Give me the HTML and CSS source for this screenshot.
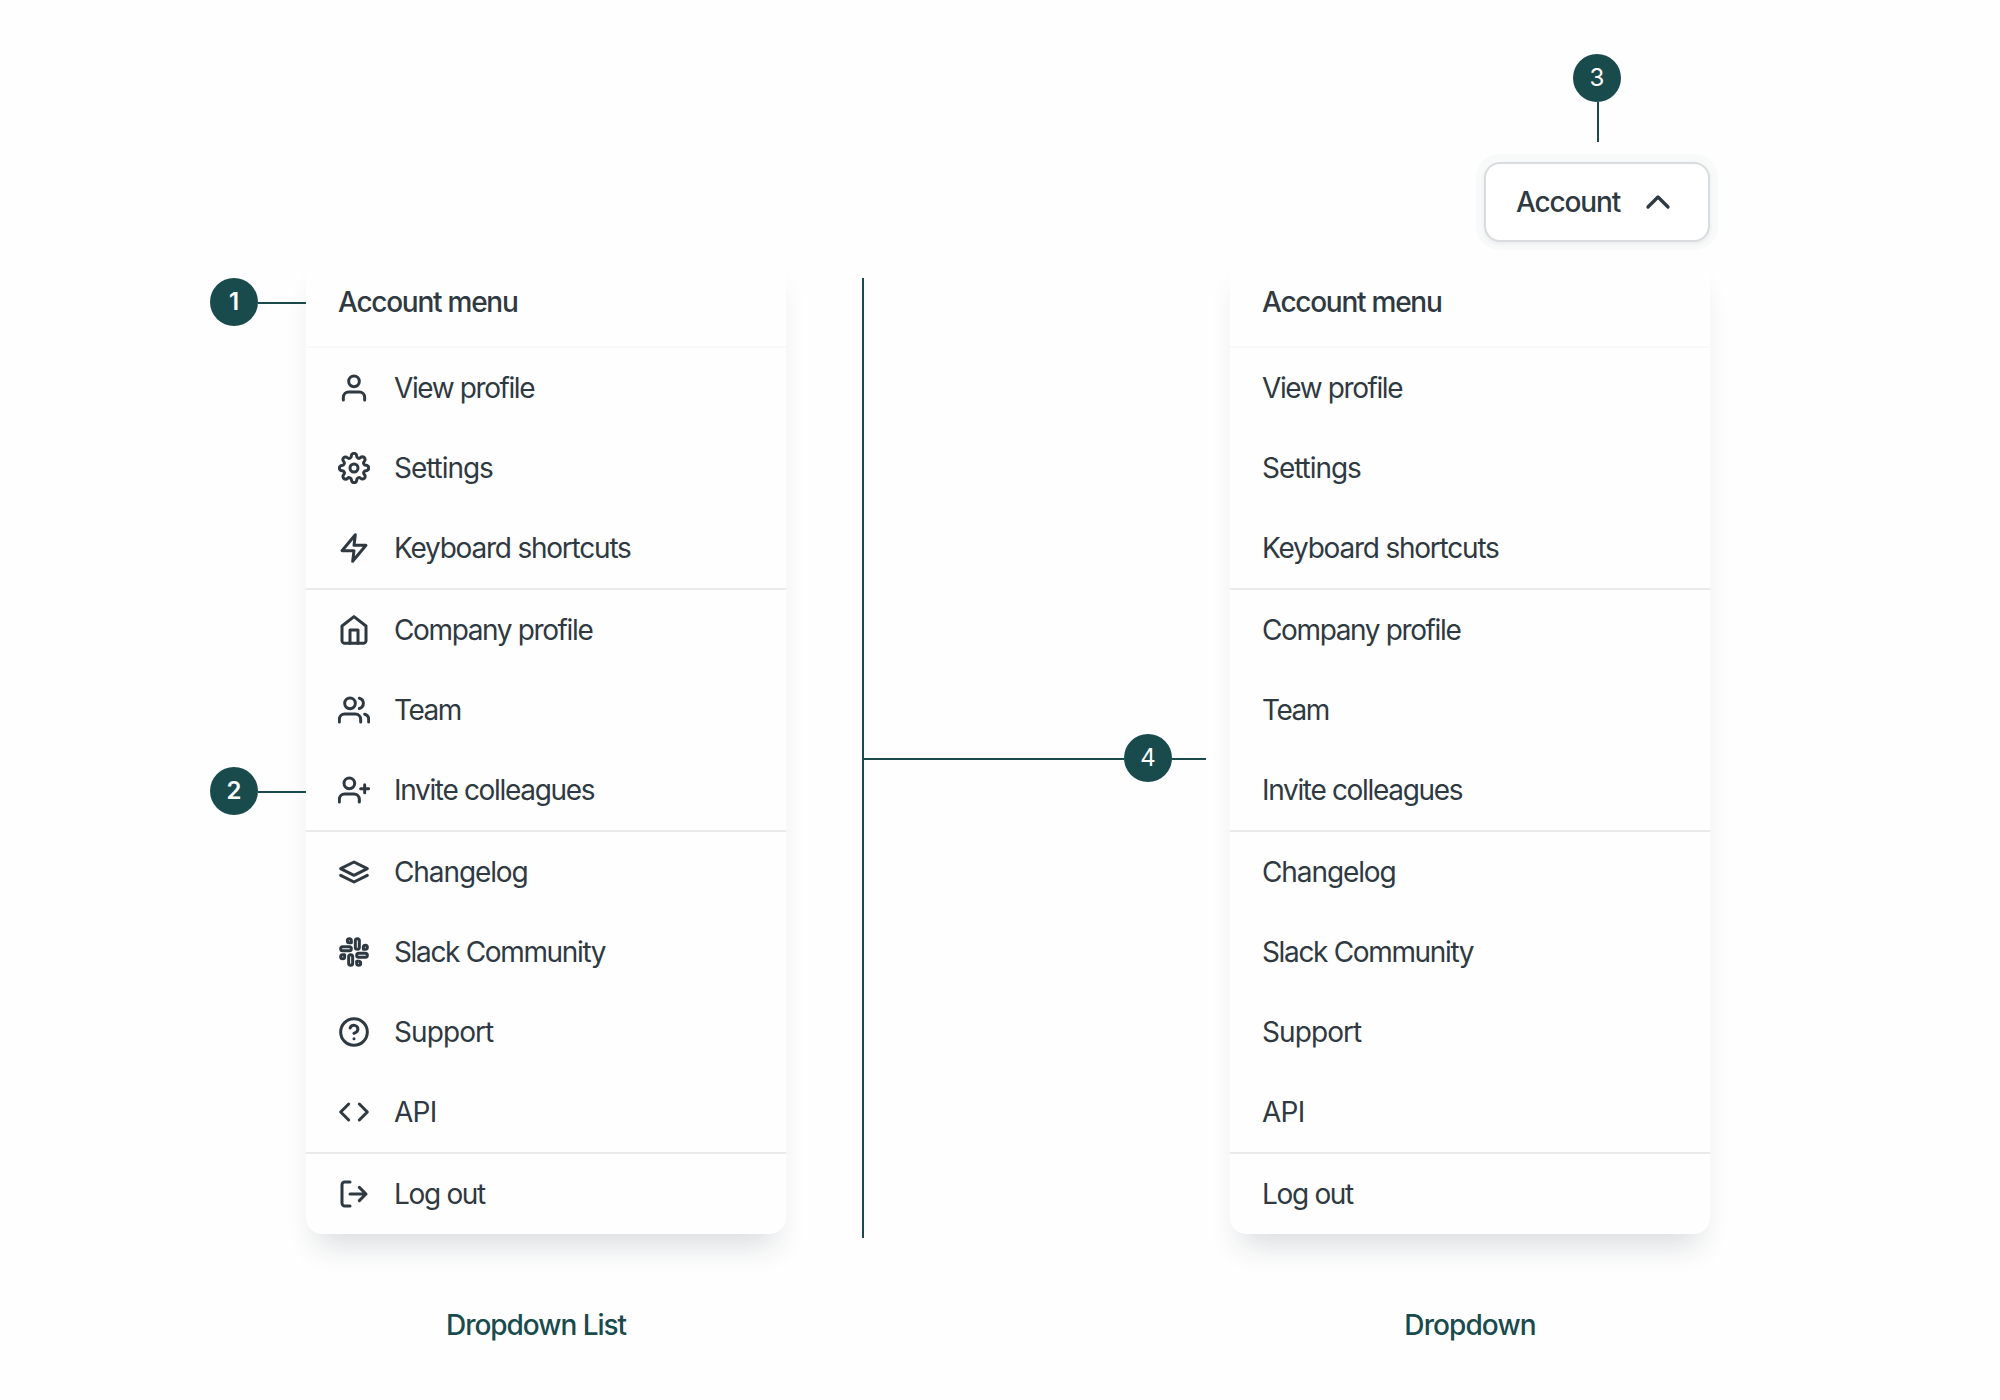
FILE: index.html
```html
<!DOCTYPE html>
<html lang="en">
<head>
<meta charset="utf-8">
<title>Dropdown anatomy</title>
<link rel="stylesheet" href="styles.css">
</head>
<body>
<svg class="sprite" aria-hidden="true">
  <symbol id="user" viewBox="0 0 24 24"><path d="M20 21v-2a4 4 0 0 0-4-4H8a4 4 0 0 0-4 4v2"/><circle cx="12" cy="7" r="4"/></symbol>
  <symbol id="settings" viewBox="0 0 24 24"><circle cx="12" cy="12" r="3"/><path d="M19.4 15a1.65 1.65 0 0 0 .33 1.82l.06.06a2 2 0 0 1 0 2.83 2 2 0 0 1-2.83 0l-.06-.06a1.65 1.65 0 0 0-1.82-.33 1.65 1.65 0 0 0-1 1.51V21a2 2 0 0 1-2 2 2 2 0 0 1-2-2v-.09A1.65 1.65 0 0 0 9 19.4a1.65 1.65 0 0 0-1.82.33l-.06.06a2 2 0 0 1-2.83 0 2 2 0 0 1 0-2.83l.06-.06a1.65 1.65 0 0 0 .33-1.82 1.65 1.65 0 0 0-1.51-1H3a2 2 0 0 1-2-2 2 2 0 0 1 2-2h.09A1.65 1.65 0 0 0 4.6 9a1.65 1.65 0 0 0-.33-1.82l-.06-.06a2 2 0 0 1 0-2.83 2 2 0 0 1 2.83 0l.06.06a1.65 1.65 0 0 0 1.82.33H9a1.65 1.65 0 0 0 1-1.51V3a2 2 0 0 1 2-2 2 2 0 0 1 2 2v.09a1.65 1.65 0 0 0 1 1.51 1.65 1.65 0 0 0 1.82-.33l.06-.06a2 2 0 0 1 2.83 0 2 2 0 0 1 0 2.83l-.06.06a1.65 1.65 0 0 0-.33 1.82V9a1.65 1.65 0 0 0 1.51 1H21a2 2 0 0 1 2 2 2 2 0 0 1-2 2h-.09a1.65 1.65 0 0 0-1.51 1z"/></symbol>
  <symbol id="zap" viewBox="0 0 24 24"><path d="M13 2 3 14h9l-1 8 10-12h-9l1-8z"/></symbol>
  <symbol id="home" viewBox="0 0 24 24"><path d="m3 9 9-7 9 7v11a2 2 0 0 1-2 2H5a2 2 0 0 1-2-2z"/><path d="M9 22V12h6v10"/></symbol>
  <symbol id="users" viewBox="0 0 24 24"><path d="M17 21v-2a4 4 0 0 0-4-4H5a4 4 0 0 0-4 4v2"/><circle cx="9" cy="7" r="4"/><path d="M23 21v-2a4 4 0 0 0-3-3.87M16 3.13a4 4 0 0 1 0 7.75"/></symbol>
  <symbol id="user-plus" viewBox="0 0 24 24"><path d="M16 21v-2a4 4 0 0 0-4-4H5a4 4 0 0 0-4 4v2"/><circle cx="8.5" cy="7" r="4"/><path d="M20 8v6M23 11h-6"/></symbol>
  <symbol id="layers" viewBox="0 0 24 24"><path d="M12 4.5 2 9.5l10 5 10-5-10-5z"/><path d="m2 14.500 10 5 10-5"/></symbol>
  <symbol id="slack" viewBox="0 0 24 24"><path d="M14.500 10c-.83 0-1.500-.67-1.500-1.500v-5c0-.83.67-1.500 1.500-1.500s1.500.67 1.500 1.500v5c0 .83-.67 1.500-1.500 1.500z"/><path d="M20.500 10H19V8.500c0-.83.67-1.500 1.500-1.500s1.500.67 1.500 1.500-.67 1.500-1.500 1.500z"/><path d="M9.500 14c.83 0 1.500.67 1.500 1.500v5c0 .83-.67 1.500-1.500 1.500S8 21.330 8 20.500v-5c0-.83.67-1.500 1.500-1.500z"/><path d="M3.500 14H5v1.500c0 .83-.67 1.500-1.500 1.500S2 16.330 2 15.500 2.670 14 3.500 14z"/><path d="M14 14.500c0-.83.67-1.500 1.500-1.500h5c.83 0 1.500.67 1.500 1.500s-.67 1.500-1.500 1.500h-5c-.83 0-1.500-.67-1.500-1.500z"/><path d="M15.500 19H14v1.500c0 .83.67 1.500 1.500 1.500s1.500-.67 1.500-1.500-.67-1.500-1.500-1.500z"/><path d="M10 9.500C10 8.670 9.330 8 8.500 8h-5C2.670 8 2 8.670 2 9.500S2.670 11 3.500 11h5c.83 0 1.500-.67 1.500-1.500z"/><path d="M8.500 5H10V3.500C10 2.670 9.330 2 8.500 2S7 2.670 7 3.500 7.670 5 8.500 5z"/></symbol>
  <symbol id="help" viewBox="0 0 24 24"><circle cx="12" cy="12" r="10"/><path d="M9.090 9a3 3 0 0 1 5.830 1c0 2-3 3-3 3M12 17h.01"/></symbol>
  <symbol id="code" viewBox="0 0 24 24"><path d="m16 18 6-6-6-6M8 6l-6 6 6 6"/></symbol>
  <symbol id="log-out" viewBox="0 0 24 24"><path d="M9 21H5a2 2 0 0 1-2-2V5a2 2 0 0 1 2-2h4M16 17l5-5-5-5M21 12H9"/></symbol>
  <symbol id="chevron-up" viewBox="0 0 24 24"><path d="m18 15-6-6-6 6"/></symbol>
</svg>
<main class="board">
  <section class="callouts">
    <div class="callout"><span class="badge strong">1</span><span class="lead"></span></div>
    <div class="callout"><span class="badge strong">2</span><span class="lead"></span></div>
  </section>

  <section class="column">
    <div class="menu">
      <h2 class="menu-title"><span class="t-title">Account menu</span></h2>
      <ul class="group">
        <li><svg class="icon"><use href="#user"/></svg><span class="t-view">View profile</span></li>
        <li><svg class="icon"><use href="#settings"/></svg><span class="t-settings">Settings</span></li>
        <li><svg class="icon"><use href="#zap"/></svg><span class="t-keyboard">Keyboard shortcuts</span></li>
      </ul>
      <ul class="group">
        <li><svg class="icon"><use href="#home"/></svg><span class="t-company">Company profile</span></li>
        <li><svg class="icon"><use href="#users"/></svg><span class="t-team">Team</span></li>
        <li><svg class="icon"><use href="#user-plus"/></svg><span class="t-invite">Invite colleagues</span></li>
      </ul>
      <ul class="group">
        <li><svg class="icon"><use href="#layers"/></svg><span class="t-changelog">Changelog</span></li>
        <li><svg class="icon"><use href="#slack"/></svg><span class="t-slack">Slack Community</span></li>
        <li><svg class="icon"><use href="#help"/></svg><span class="t-support">Support</span></li>
        <li><svg class="icon"><use href="#code"/></svg><span class="t-api">API</span></li>
      </ul>
      <ul class="group">
        <li><svg class="icon"><use href="#log-out"/></svg><span class="t-logout">Log out</span></li>
      </ul>
    </div>
    <p class="caption caption-list"><span class="t-list">Dropdown List</span></p>
  </section>

  <section class="bridge">
    <span class="rule"></span>
    <span class="lead lead-long"></span>
    <span class="badge">4</span>
    <span class="lead lead-short"></span>
  </section>

  <section class="column">
    <div class="trigger-area">
      <div class="callout-down"><span class="badge">3</span><span class="stem"></span></div>
      <button class="trigger" type="button"><span class="t-account">Account</span><svg class="icon chevron"><use href="#chevron-up"/></svg></button>
    </div>
    <div class="menu">
      <h2 class="menu-title"><span class="t-title">Account menu</span></h2>
      <ul class="group">
        <li><span class="t-view">View profile</span></li>
        <li><span class="t-settings">Settings</span></li>
        <li><span class="t-keyboard">Keyboard shortcuts</span></li>
      </ul>
      <ul class="group">
        <li><span class="t-company">Company profile</span></li>
        <li><span class="t-team">Team</span></li>
        <li><span class="t-invite">Invite colleagues</span></li>
      </ul>
      <ul class="group">
        <li><span class="t-changelog">Changelog</span></li>
        <li><span class="t-slack">Slack Community</span></li>
        <li><span class="t-support">Support</span></li>
        <li><span class="t-api">API</span></li>
      </ul>
      <ul class="group">
        <li><span class="t-logout">Log out</span></li>
      </ul>
    </div>
    <p class="caption"><span class="t-dropdown">Dropdown</span></p>
  </section>
</main>
</body>
</html>
```
FILE: styles.css
```css
* { box-sizing: border-box; margin: 0; padding: 0; }

body {
  background: #fefefe;
  color: #2f3941;
  font-family: Inter, "Liberation Sans", sans-serif;
  font-size: 28px;
  line-height: 40px;
}

.sprite { display: none; }

.board {
  width: 2000px;
  height: 1400px;
  display: flex;
  padding-left: 210px;
  overflow: hidden;
}

/* Numbered callouts */
.callouts {
  width: 96px;
  padding-top: 278px;
  display: flex;
  flex-direction: column;
  gap: 441px;
}
.callout { display: flex; align-items: center; }
.badge {
  flex: none;
  width: 48px;
  height: 48px;
  border-radius: 50%;
  background: #194b4d;
  color: #fff;
  font-size: 24px;
  line-height: 48px;
  text-align: center;
}
.strong { font-weight: 600; }
.lead { height: 2px; background: #194b4d; margin-top: 2px; }
.callout .lead { flex: 1; }

/* Menus */
.column {
  width: 480px;
  display: flex;
  flex-direction: column;
  justify-content: flex-end;
  padding-bottom: 55px;
}
.menu {
  border-radius: 16px;
  background: #fefefe;
  box-shadow: 0 22px 30px -11px rgba(24, 38, 56, .155);
}
.menu-title {
  height: 90px;
  padding: 24px 32px 0;
  border-bottom: 2px solid #f8f9f9;
  font-size: 28px;
  font-weight: 500;
  line-height: 40px;
  white-space: nowrap;
}
.group { list-style: none; }
.group + .group { border-top: 2px solid #e9eaeb; }
.group li {
  height: 80px;
  padding: 0 32px;
  display: flex;
  align-items: center;
  gap: 24px;
  white-space: nowrap;
}
.icon {
  flex: none;
  width: 32px;
  height: 32px;
  fill: none;
  stroke: #2f3941;
  stroke-width: 2.25;
  stroke-linecap: round;
  stroke-linejoin: round;
}
.caption {
  margin-top: 71px;
  color: #194b4d;
  font-weight: 500;
  text-align: center;
}
.caption-list { padding-right: 20px; }

/* Tracking of each label */
.t-title { letter-spacing: -1.25px; }
.t-view { letter-spacing: -1.4px; }
.t-settings { letter-spacing: -1.05px; }
.t-keyboard { letter-spacing: -1.22px; }
.t-company { letter-spacing: -1.37px; }
.t-team { letter-spacing: -1.5px; }
.t-invite { letter-spacing: -1.33px; }
.t-changelog { letter-spacing: -1.1px; }
.t-slack { letter-spacing: -1.34px; }
.t-support { letter-spacing: -.92px; }
.t-api { letter-spacing: -.7px; }
.t-logout { letter-spacing: -1.32px; }
.t-account { letter-spacing: -1.15px; }
.t-list { letter-spacing: -1.04px; }
.t-dropdown { letter-spacing: -.9px; }

/* Divider that joins the two variants */
.bridge {
  width: 444px;
  padding: 278px 0 162px 76px;
  display: flex;
  align-items: center;
}
.rule { width: 2px; height: 960px; background: #194b4d; }
.lead-long { width: 260px; }
.lead-short { width: 34px; }

/* Trigger button */
.trigger-area {
  flex: 1;
  padding-top: 54px;
  display: flex;
  flex-direction: column;
  align-items: flex-end;
}
.callout-down {
  width: 226px;
  display: flex;
  flex-direction: column;
  align-items: center;
}
.stem { width: 2px; height: 40px; margin-left: 2px; background: #194b4d; }
.trigger {
  width: 226px;
  height: 80px;
  margin-top: 20px;
  padding: 0 30px;
  display: flex;
  align-items: center;
  justify-content: space-between;
  border: 2px solid #d8dcde;
  border-radius: 16px;
  background: #fff;
  box-shadow: 0 2px 4px rgba(24, 38, 56, .06), 0 0 0 8px #f8f9f9;
  color: inherit;
  font: 500 28px/40px Inter, "Liberation Sans", sans-serif;
}
.chevron { width: 40px; height: 40px; stroke-width: 2; }
```
